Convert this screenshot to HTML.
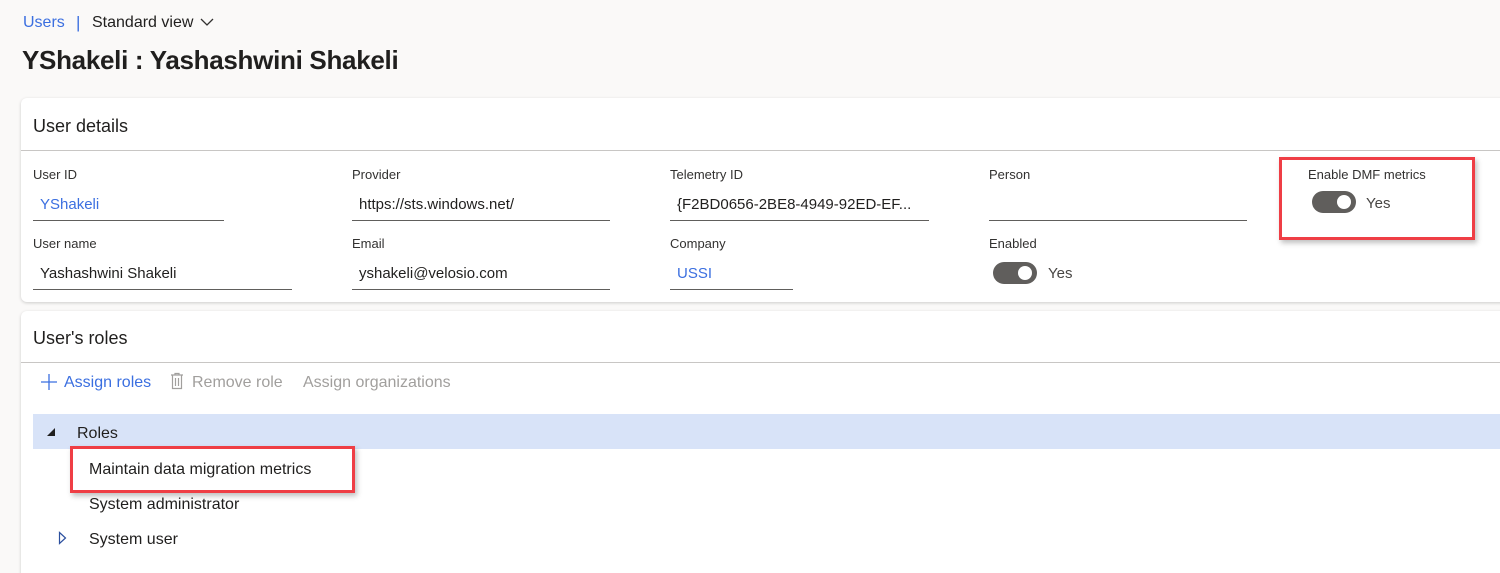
<!DOCTYPE html>
<html style="overflow:hidden"><head><style>
*{margin:0;padding:0;box-sizing:border-box}
html,body{width:1500px;height:573px;overflow:hidden}
body{background:#faf9f8;font-family:"Liberation Sans",sans-serif;color:#201f1e;position:relative}
.a{position:absolute;white-space:nowrap}
.card{position:absolute;background:#fff;border-radius:6px;box-shadow:0 1px 3px rgba(0,0,0,.18)}
.lbl{font-size:13px;color:#323130}
.val{font-size:15px}
.ul{position:absolute;height:1px;background:#605e5c}
.tg{position:absolute;width:44px;height:22px;border-radius:11px;background:#605e5c}
.tg:after{content:"";position:absolute;right:5px;top:4px;width:14px;height:14px;border-radius:50%;background:#fff}
.red{position:absolute;border:3px solid #ef3e45;box-shadow:2px 3px 5px rgba(0,0,0,.25)}
</style></head><body>
<div class="a" style="left:23px;top:14px;font-size:16px;color:#3b6fe0">Users</div>
<div class="a" style="left:76px;top:13px;font-size:17px;color:#3b6fe0">|</div>
<div class="a" style="left:92px;top:14px;font-size:16px">Standard view</div>
<svg class="a" style="left:200px;top:17px" width="14" height="10"><path d="M1 2l6 6 6-6" fill="none" stroke="#323130" stroke-width="1.3"/></svg>
<div class="a" style="left:22px;top:45px;font-size:26px;font-weight:bold;color:#201f1e;letter-spacing:-.3px">YShakeli : Yashashwini Shakeli</div>

<div class="card" style="left:21px;top:98px;width:1490px;height:204px"></div>
<div class="a" style="left:33px;top:116px;font-size:18px">User details</div>
<div class="a" style="left:21px;top:150px;width:1480px;height:1px;background:#c8c6c4"></div>

<div class="a lbl" style="left:33px;top:167px">User ID</div>
<div class="a val" style="left:40px;top:196px;color:#3b6fe0">YShakeli</div>
<div class="ul" style="left:33px;top:220px;width:191px"></div>
<div class="a lbl" style="left:352px;top:167px">Provider</div>
<div class="a val" style="left:359px;top:196px">https://sts.windows.net/</div>
<div class="ul" style="left:352px;top:220px;width:258px"></div>
<div class="a lbl" style="left:670px;top:167px">Telemetry ID</div>
<div class="a val" style="left:677px;top:196px">{F2BD0656-2BE8-4949-92ED-EF...</div>
<div class="ul" style="left:670px;top:220px;width:259px"></div>
<div class="a lbl" style="left:989px;top:167px">Person</div>
<div class="ul" style="left:989px;top:220px;width:258px"></div>
<div class="a lbl" style="left:1308px;top:167px">Enable DMF metrics</div>
<div class="tg" style="left:1312px;top:191px"></div>
<div class="a val" style="left:1366px;top:195px;color:#484644">Yes</div>
<div class="red" style="left:1279px;top:157px;width:196px;height:83px"></div>

<div class="a lbl" style="left:33px;top:236px">User name</div>
<div class="a val" style="left:40px;top:265px">Yashashwini Shakeli</div>
<div class="ul" style="left:33px;top:289px;width:259px"></div>
<div class="a lbl" style="left:352px;top:236px">Email</div>
<div class="a val" style="left:359px;top:265px">yshakeli@velosio.com</div>
<div class="ul" style="left:352px;top:289px;width:258px"></div>
<div class="a lbl" style="left:670px;top:236px">Company</div>
<div class="a val" style="left:677px;top:265px;color:#3b6fe0">USSI</div>
<div class="ul" style="left:670px;top:289px;width:123px"></div>
<div class="a lbl" style="left:989px;top:236px">Enabled</div>
<div class="tg" style="left:993px;top:262px"></div>
<div class="a val" style="left:1048px;top:265px;color:#484644">Yes</div>

<div class="card" style="left:21px;top:311px;width:1490px;height:280px"></div>
<div class="a" style="left:33px;top:328px;font-size:18px">User's roles</div>
<div class="a" style="left:21px;top:362px;width:1480px;height:1px;background:#c8c6c4"></div>
<svg class="a" style="left:40px;top:373px" width="18" height="18"><path d="M9 1v16M1 9h16" stroke="#3b6fe0" stroke-width="1.3"/></svg>
<div class="a val" style="left:64px;top:374px;color:#3b6fe0;font-size:16px">Assign roles</div>
<svg class="a" style="left:169px;top:372px" width="16" height="18"><path d="M2 3h12M6 3V1.5h4V3M3.5 3.5v13h9v-13M6.5 6v8M9.5 6v8" fill="none" stroke="#a19f9d" stroke-width="1.2"/></svg>
<div class="a val" style="left:192px;top:374px;color:#a19f9d;font-size:16px">Remove role</div>
<div class="a val" style="left:303px;top:374px;color:#a19f9d;font-size:16px">Assign organizations</div>

<div class="a" style="left:33px;top:414px;width:1470px;height:35px;background:#d8e3f8"></div>
<svg class="a" style="left:46px;top:427px" width="10" height="10"><path d="M9 1v8H1z" fill="#201f1e"/></svg>
<div class="a val" style="left:77px;top:425px;font-size:16px">Roles</div>
<div class="a val" style="left:89px;top:461px;font-size:16px">Maintain data migration metrics</div>
<div class="red" style="left:70px;top:446px;width:285px;height:47px"></div>
<div class="a val" style="left:89px;top:496px;font-size:16px">System administrator</div>
<svg class="a" style="left:58px;top:531px" width="10" height="14"><path d="M1.5 1.5l6 5.5-6 5.5z" fill="none" stroke="#2b4f9e" stroke-width="1.2"/></svg>
<div class="a val" style="left:89px;top:531px;font-size:16px">System user</div>
</body></html>
